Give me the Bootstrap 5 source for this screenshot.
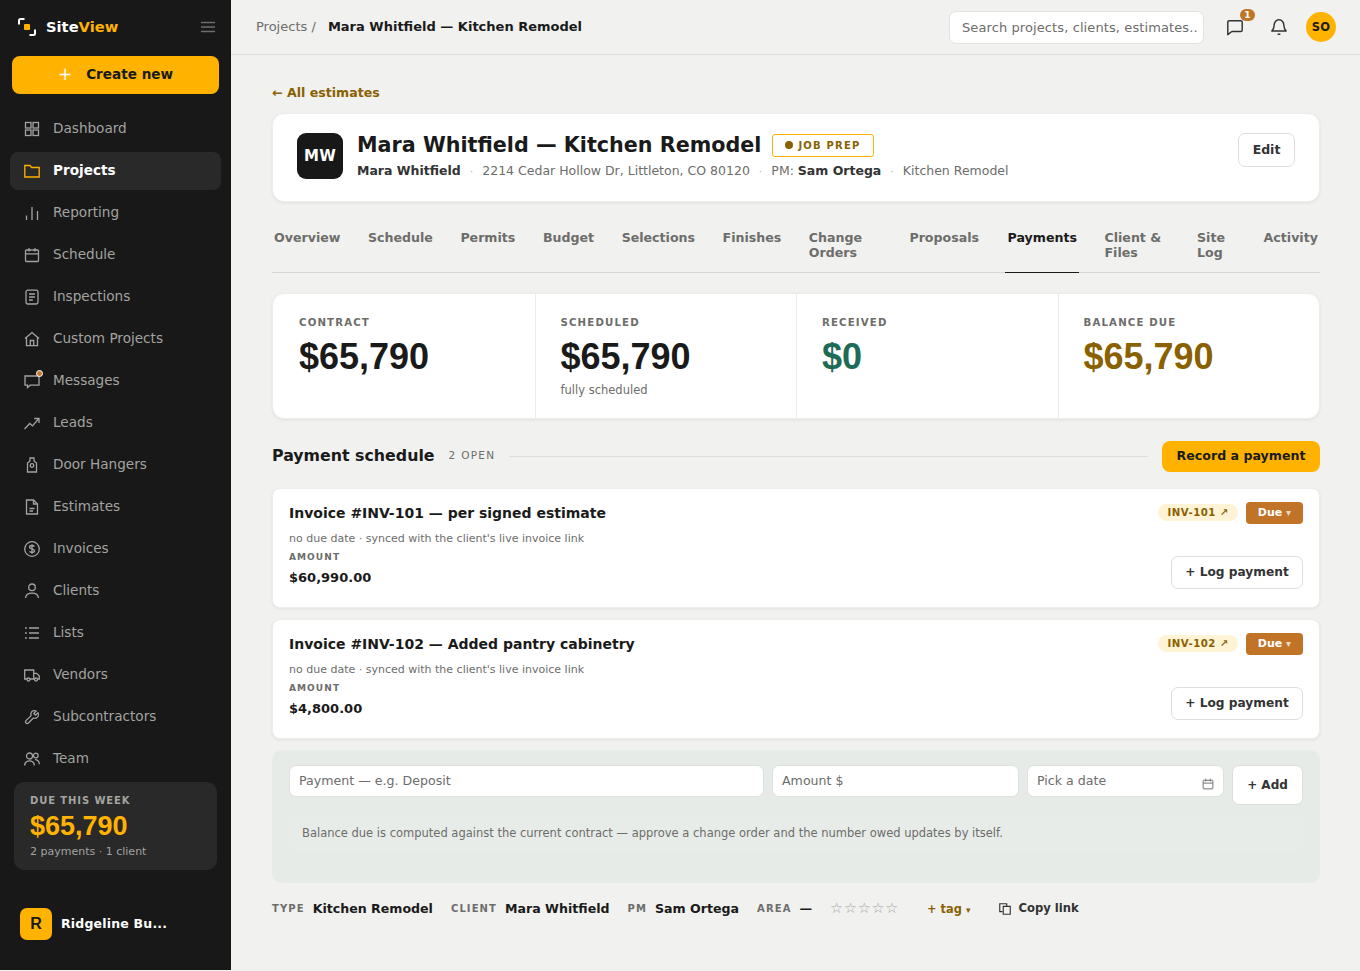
<!DOCTYPE html>
<html lang="en">
<head>
  <meta charset="UTF-8" />
  <title>SiteView - Mara Whitfield Kitchen Remodel</title>
  <meta name="viewport" content="width=device-width, initial-scale=1" />
  <link href="https://cdn.jsdelivr.net/npm/bootstrap@5.3.0/dist/css/bootstrap.min.css" rel="stylesheet" />
  <style>
    html, body { height: 100%; }
    body {
      font-family: "DejaVu Sans", sans-serif;
      background: #f1f1ef;
      color: #1a1a1a;
      overflow: hidden;
    }
    .app-shell { height: 970px; }
    .side {
      width: 231px;
      flex: none;
      background: #181818;
      height: 970px;
      padding: 0 10px;
    }
    .brand-row { height: 54px; padding: 0 5px 0 8px; }
    .brand-row > svg:first-child { margin-right: 10px; }
    .brand-name { font-size: 14.7px; font-weight: 700; color: #fff; padding-top: 1px; }
    .brand-name span { color: #ffb300; }
    .menu-lines { color: #6d6d6b; }
    .create-btn {
      margin: 2px 2px 0;
      width: 207px;
      height: 38px;
      background: #ffb300;
      border: 0;
      border-radius: 8px;
      color: #1a1a1a;
      font-size: 13.6px;
      font-weight: 700;
      padding-bottom: 2px;
    }
    .create-btn b { color: #fff; font-size: 17px; font-weight: 400; margin-right: 14px; line-height: 1; }
    .side-nav { margin-top: 16px; gap: 4px; }
    .side-link {
      height: 38px;
      border-radius: 8px;
      padding: 0 0 2px 14px;
      color: #a3a3a0;
      font-size: 13.6px;
      text-decoration: none;
      gap: 13px;
      position: relative;
    }
    .side-link svg { flex: none; width: 16px; height: 16px; margin-top: 2px; }
    .side-link.on { background: #292929; color: #fff; font-weight: 700; }
    .side-link.on svg { color: #ffb300; }
    .msg-dot {
      position: absolute;
      left: 26px;
      top: 8px;
      background: #c47a2c;
      border: 1.5px solid #fff;
      border-radius: 50%;
      box-sizing: content-box;
      width: 5px;
      height: 5px;
    }
    .due-box {
      margin: 4px 4px 0;
      height: 88px;
      background: #292929;
      border-radius: 10px;
      padding: 12px 16px;
    }
    .due-label { font-size: 10px; font-weight: 700; letter-spacing: .9px; color: #a3a3a0; line-height: 14px; }
    .due-val { font-family: "Liberation Sans", sans-serif; font-size: 27px; font-weight: 700; color: #ffb300; line-height: 32px; margin-top: 2px; }
    .due-sub { font-size: 11px; color: #a3a3a0; line-height: 15px; margin-top: 2px; }
    .org-row { margin-top: 38px; padding-left: 10px; gap: 9px; }
    .org-mark { width: 32px; height: 32px; background: #ffb300; border-radius: 7px; font-weight: 700; font-size: 16px; font-family: "Liberation Sans", sans-serif; color: #1a1a1a; }
    .org-name { color: #fff; font-size: 12.5px; font-weight: 700; letter-spacing: .2px; }

    .top-bar { height: 55px; border-bottom: 1px solid #dcdcda; padding: 0 24px 0 25px; flex: none; }
    .crumb { font-size: 13px; color: #6d6d6b; }
    .crumb strong { color: #1a1a1a; margin-left: 8px; }
    .search-box {
      width: 255px;
      height: 33px;
      background: #fff;
      border: 1px solid #e3e3e1;
      border-radius: 7px;
      padding: 0 4px 0 12px;
      font-size: 13px;
      color: #6d6d6b;
      font-family: inherit;
      letter-spacing: .1px;
    }
    .search-box::placeholder { color: #6d6d6b; opacity: 1; }
    .top-icon { color: #333; position: relative; width: 20px; height: 20px; }
    .top-icon svg { display: block; margin: 1px; }
    .count-pill {
      position: absolute;
      left: 15px;
      top: -8px;
      width: 15px;
      height: 12px;
      border-radius: 7px;
      background: #c17428;
      color: #fff;
      font-size: 9px;
      font-weight: 700;
      line-height: 12px;
      text-align: center;
    }
    .avatar-so { width: 30px; height: 30px; border-radius: 50%; background: #ffb300; font-size: 11.5px; font-weight: 700; letter-spacing: .3px; padding-top: 1px; }

    .page-body { padding: 30px 40px 0 41px; }
    .back-link { color: #8a6100; font-size: 12.6px; font-weight: 700; text-decoration: none; line-height: 16px; display: block; }
    .panel-white {
      background: #fff;
      border: 1px solid #ededeb;
      border-radius: 12px;
      box-shadow: 0 1px 3px rgba(0,0,0,.07);
    }
    .job-head { margin-top: 12px; height: 89px; padding: 19px 24px 0 24px; gap: 14px; }
    .job-mono { width: 46px; height: 46px; background: #181818; border-radius: 9px; color: #fff; font-weight: 700; font-size: 15px; letter-spacing: .3px; flex: none; }
    .job-title { font-size: 20.7px; font-weight: 700; line-height: 24px; color: #1a1a1a; }
    .job-stage {
      border: 1px solid #ffb300;
      border-radius: 3px;
      height: 23px;
      padding: 0 12px;
      margin-left: 3px;
      color: #8a6100;
      font-size: 10px;
      font-weight: 700;
      letter-spacing: 1.2px;
      gap: 5px;
    }
    .job-stage i { width: 8px; height: 8px; border-radius: 50%; background: #8a6100; display: block; }
    .job-meta { font-size: 12.5px; color: #6d6d6b; margin-top: 5px; line-height: 18px; }
    .job-meta strong { color: #333; }
    .job-meta em { font-style: normal; color: #b5b5b2; margin: 0 9px; font-size: 11px; }
    .ghost-btn {
      background: #fff;
      border: 1px solid #dededc;
      border-radius: 7px;
      color: #333;
      font-weight: 700;
      font-size: 12.5px;
    }
    .edit-btn { width: 57px; height: 34px; flex: none; }

    .tab-strip { margin-top: 17px; border-bottom: 1px solid #d6d6d4; height: 54px; }
    .tab-item {
      font-size: 12.6px;
      font-weight: 700;
      line-height: 15px;
      color: #6d6d6b;
      text-decoration: none;
      padding: 11px 2px 0;
      height: 54px;
    }
    .tab-item.on { color: #1a1a1a; border-bottom: 1px solid #1a1a1a; padding-left: 3px; padding-right: 2px; }
    .tab-change { width: 77px; }
    .tab-client { width: 69px; }
    .tab-site { width: 43px; }

    .stat-band { margin-top: 20px; height: 126px; }
    .stat-cell { padding: 22px 25px; border-left: 1px solid #ececea; }
    .stat-cell:first-child { border-left: 0; padding-left: 26px; }
    .stat-label { font-size: 10.2px; font-weight: 600; letter-spacing: 1.15px; color: #6d6d6b; line-height: 14px; }
    .stat-val { font-family: "Liberation Sans", sans-serif; font-weight: 700; font-size: 36px; line-height: 42px; margin-top: 6px; }
    .stat-note { font-size: 11.5px; color: #6d6d6b; margin-top: 4px; line-height: 16px; }
    .tone-green { color: #1e6b57; }
    .tone-gold { color: #8a6100; }

    .sched-head { margin-top: 21px; height: 32px; gap: 14px; }
    .sched-title { font-size: 15.8px; font-weight: 700; }
    .sched-open { font-size: 10.5px; letter-spacing: 1.3px; color: #6d6d6b; }
    .sched-rule { flex: 1; height: 1px; background: #dededc; }
    .record-btn {
      width: 158px;
      height: 31px;
      background: #ffb300;
      border: 0;
      border-radius: 8px;
      font-size: 12.6px;
      font-weight: 700;
      color: #1a1a1a;
    }
    .invoice-row { height: 120px; padding: 14px 16px 0; border-radius: 8px; margin-top: 16px; }
    .invoice-row + .invoice-row { margin-top: 11px; }
    .inv-title { font-size: 14px; font-weight: 700; line-height: 20px; }
    .inv-sub { font-size: 11px; color: #6d6d6b; line-height: 15px; margin-top: 8px; }
    .inv-label { font-size: 9px; font-weight: 600; letter-spacing: 1.1px; color: #6d6d6b; line-height: 12px; margin-top: 5px; }
    .inv-amount { font-size: 13px; font-weight: 700; line-height: 18px; margin-top: 6px; }
    .inv-chip { height: 17px; border-radius: 9px; background: #fff3d6; color: #8a6100; font-size: 10.2px; font-weight: 700; letter-spacing: .5px; padding: 0 9px; line-height: 17px; margin-top: 1px; }
    .inv-due { width: 57px; height: 22px; border-radius: 4px; background: #c17428; color: #fff; font-size: 11px; font-weight: 700; line-height: 22px; text-align: center; margin-top: -1px; }
    .inv-due span { opacity: .7; font-size: 10px; }
    .log-btn { width: 132px; height: 33px; font-size: 12.2px; margin-top: 32px; }

    .add-band { margin-top: 11px; height: 133px; background: #e6ebe7; border-radius: 10px; padding: 15px 17px 0; }
    .add-input {
      height: 32px;
      border: 1px solid #e0e0de;
      border-radius: 7px;
      background: #fff;
      font-size: 12.6px;
      color: #6d6d6b;
      padding: 0 9px 2px;
      font-family: inherit;
      min-width: 0;
    }
    .add-input::placeholder { color: #6d6d6b; opacity: 1; }
    .amount-field { width: 247px; flex: none; }
    .date-field { width: 197px; flex: none; }
    .date-field svg { position: absolute; right: 10px; top: 13px; color: #6d6d6b; }
    .add-btn { width: 71px; height: 40px; flex: none; font-size: 12px; }
    .add-note { margin-top: 10px; height: 37px; padding-left: 13px; background: #e7ece8; border-radius: 6px; font-size: 11.5px; color: #6d6d6b; }

    .meta-row { margin-top: 16px; height: 20px; font-size: 12.6px; font-weight: 700; color: #1a1a1a; }
    .meta-key { font-size: 10px; font-weight: 600; letter-spacing: 1.1px; color: #6d6d6b; margin-right: 8px; padding-bottom: 2px; }
    .meta-gap { margin-left: 18px; }
    .meta-stars { color: #a3a3a0; font-size: 14.5px; font-weight: 400; letter-spacing: .8px; margin-left: 18px; }
    .tag-add { color: #8a6100; font-size: 11.4px; margin-left: 28px; padding-top: 1px; }
    .tag-add span { font-size: 9px; }
    .copy-link { color: #333; font-size: 11.6px; gap: 6px; margin-left: 28px; }
  </style>
</head>
<body>
  <svg width="0" height="0" class="position-absolute">
    <defs>
      <symbol id="i-grid" viewBox="0 0 16 16"><g fill="none" stroke="currentColor" stroke-width="1.300"><rect x="1.500" y="1.500" width="5.500" height="5.500"/><rect x="9" y="1.500" width="5.500" height="5.500"/><rect x="1.500" y="9" width="5.500" height="5.500"/><rect x="9" y="9" width="5.500" height="5.500"/></g></symbol>
      <symbol id="i-folder" viewBox="0 0 16 16"><path d="M.8 2.500h5.200l1.600 2h7.600v9.500H.8z" fill="none" stroke="currentColor" stroke-width="1.300"/></symbol>
      <symbol id="i-bars" viewBox="0 0 16 16"><path d="M2.500 15V10.500M8 15V2M13.500 15V6" fill="none" stroke="currentColor" stroke-width="1.300"/></symbol>
      <symbol id="i-cal" viewBox="0 0 16 16"><g fill="none" stroke="currentColor" stroke-width="1.300"><rect x="1.500" y="3" width="13" height="11.500" rx="1"/><path d="M1.500 6.800h13M5 1v3.500M11 1v3.500"/></g></symbol>
      <symbol id="i-doc" viewBox="0 0 16 16"><g fill="none" stroke="currentColor" stroke-width="1.300"><rect x="2" y="1.200" width="12" height="13.800" rx="1.800"/><path d="M5 5h6M5 8h6M5 11h3.800"/></g></symbol>
      <symbol id="i-home" viewBox="0 0 16 16"><g fill="none" stroke="currentColor" stroke-width="1.300"><path d="M1 7.600 8 1.500l7 6.100M2.500 6.500v8.200h11V6.500"/><path d="M6.300 14.700V9.500h3.400v5.200"/></g></symbol>
      <symbol id="i-chat" viewBox="0 0 16 16"><path d="M1 3h14v9.200H6.200l-2.700 2.300v-2.300H1z" fill="none" stroke="currentColor" stroke-width="1.300"/></symbol>
      <symbol id="i-trend" viewBox="0 0 16 16"><path d="M.5 14 5.800 8.500l2.700 2.400L14.500 4M10.200 3.500h4.800v4.500" fill="none" stroke="currentColor" stroke-width="1.300"/></symbol>
      <symbol id="i-hanger" viewBox="0 0 16 16"><g fill="none" stroke="currentColor" stroke-width="1.300"><path d="M3.500 15V6L6 4V1h4v3l2.500 2v9z"/><circle cx="8" cy="8.500" r="1.800"/></g></symbol>
      <symbol id="i-file" viewBox="0 0 16 16"><g fill="none" stroke="currentColor" stroke-width="1.300"><path d="M2.500 1h7l4 4v10h-11z"/><path d="M9.500 1v4h4M5.500 9.500h5M5.500 12h3.500"/></g></symbol>
      <symbol id="i-dollar" viewBox="0 0 16 16"><circle cx="8" cy="8" r="7.300" fill="none" stroke="currentColor" stroke-width="1.300"/><path d="M10.400 5.600C10 4.800 9 4.500 8 4.500c-1.300 0-2.500.6-2.500 1.800C5.500 8.700 10.500 7.200 10.500 9.700c0 1.200-1.200 1.800-2.500 1.800-1 0-2-.3-2.500-1.100M8 3.200v9.600" fill="none" stroke="currentColor" stroke-width="1.300"/></symbol>
      <symbol id="i-user" viewBox="0 0 16 16"><g fill="none" stroke="currentColor" stroke-width="1.300"><circle cx="8" cy="4.300" r="3.300"/><path d="M1.500 15c.4-3.300 3-4.800 6.500-4.800s6.100 1.500 6.500 4.800"/></g></symbol>
      <symbol id="i-list" viewBox="0 0 16 16"><path d="M5 3h10M5 8h10M5 13h10M1 3h1.800M1 8h1.800M1 13h1.800" fill="none" stroke="currentColor" stroke-width="1.300"/></symbol>
      <symbol id="i-truck" viewBox="0 0 16 16"><g fill="none" stroke="currentColor" stroke-width="1.300"><path d="M3 12H.7V3h9V12H6M9.700 6.300h3L15.300 9v3h-1.500M9.700 12H10.500"/><circle cx="4.500" cy="12.500" r="1.500"/><circle cx="12" cy="12.500" r="1.500"/></g></symbol>
      <symbol id="i-wrench" viewBox="0 0 16 16"><path d="M14 3.800 11.500 6.200 9.800 4.500 12.200 2C10.500 1.200 8.200 1.700 7.300 3.300 6.700 4.300 6.700 5.500 7.100 6.600L2 11.600c-.7.700-.7 1.700 0 2.400s1.700.7 2.400 0l5-5c1.100.4 2.300.4 3.300-.2 1.600-.9 2.100-3.300 1.300-5z" fill="none" stroke="currentColor" stroke-width="1.300"/></symbol>
      <symbol id="i-team" viewBox="0 0 16 16"><g fill="none" stroke="currentColor" stroke-width="1.300"><circle cx="5.500" cy="5" r="3"/><circle cx="11.800" cy="4.500" r="2.300"/><path d="M.6 14.500c.3-3 2.300-4.600 4.900-4.600s4.600 1.600 4.900 4.600M11 8.700c2.500 0 4.100 1.500 4.400 4.600"/></g></symbol>
    </defs>
  </svg>

  <div class="d-flex app-shell">
    <aside class="side d-flex flex-column">
      <div class="brand-row d-flex align-items-center">
        <svg width="18" height="18" viewBox="0 0 18 18"><path d="M1 6.500V2.500Q1 1 2.500 1H6.500M17 11.500v4q0 1.500-1.500 1.500H11.500" fill="none" stroke="#fff" stroke-width="2"/><rect x="6" y="6" width="6" height="6" rx="1" fill="#ffb300"/></svg>
        <div class="brand-name">Site<span>View</span></div>
        <svg class="menu-lines ms-auto" width="16" height="16" viewBox="0 0 16 16"><path d="M1 3.500h14M1 8h14M1 12.500h14" stroke="currentColor" stroke-width="1.500"/></svg>
      </div>
      <button class="create-btn d-flex align-items-center justify-content-center"><b>+</b>Create new</button>
      <nav class="side-nav d-flex flex-column">
        <a class="side-link d-flex align-items-center" href="#"><svg><use href="#i-grid"/></svg>Dashboard</a>
        <a class="side-link on d-flex align-items-center" href="#"><svg><use href="#i-folder"/></svg>Projects</a>
        <a class="side-link d-flex align-items-center" href="#"><svg><use href="#i-bars"/></svg>Reporting</a>
        <a class="side-link d-flex align-items-center" href="#"><svg><use href="#i-cal"/></svg>Schedule</a>
        <a class="side-link d-flex align-items-center" href="#"><svg><use href="#i-doc"/></svg>Inspections</a>
        <a class="side-link d-flex align-items-center" href="#"><svg><use href="#i-home"/></svg>Custom Projects</a>
        <a class="side-link d-flex align-items-center" href="#"><svg><use href="#i-chat"/></svg><span class="msg-dot"></span>Messages</a>
        <a class="side-link d-flex align-items-center" href="#"><svg><use href="#i-trend"/></svg>Leads</a>
        <a class="side-link d-flex align-items-center" href="#"><svg><use href="#i-hanger"/></svg>Door Hangers</a>
        <a class="side-link d-flex align-items-center" href="#"><svg><use href="#i-file"/></svg>Estimates</a>
        <a class="side-link d-flex align-items-center" href="#"><svg><use href="#i-dollar"/></svg>Invoices</a>
        <a class="side-link d-flex align-items-center" href="#"><svg><use href="#i-user"/></svg>Clients</a>
        <a class="side-link d-flex align-items-center" href="#"><svg><use href="#i-list"/></svg>Lists</a>
        <a class="side-link d-flex align-items-center" href="#"><svg><use href="#i-truck"/></svg>Vendors</a>
        <a class="side-link d-flex align-items-center" href="#"><svg><use href="#i-wrench"/></svg>Subcontractors</a>
        <a class="side-link d-flex align-items-center" href="#"><svg><use href="#i-team"/></svg>Team</a>
      </nav>
      <div class="due-box">
        <div class="due-label">DUE THIS WEEK</div>
        <div class="due-val">$65,790</div>
        <div class="due-sub">2 payments · 1 client</div>
      </div>
      <div class="org-row d-flex align-items-center">
        <div class="org-mark d-flex align-items-center justify-content-center">R</div>
        <div class="org-name">Ridgeline Bu...</div>
      </div>
    </aside>

    <div class="flex-grow-1 d-flex flex-column" style="min-width:0">
      <header class="top-bar d-flex align-items-center">
        <div class="crumb">Projects / <strong>Mara Whitfield — Kitchen Remodel</strong></div>
        <input class="search-box ms-auto" style="margin-right:21px" placeholder="Search projects, clients, estimates..." />
        <div class="top-icon">
          <svg width="18" height="18" viewBox="0 0 20 20"><path d="M2 4.500Q2 3 3.500 3h13Q18 3 18 4.500v9q0 1.500-1.500 1.500H6.500L2 18.500z" fill="none" stroke="currentColor" stroke-width="1.600" stroke-linejoin="round"/></svg>
          <span class="count-pill">1</span>
        </div>
        <div class="top-icon" style="margin-left:24px">
          <svg width="18" height="18" viewBox="0 0 20 20"><path d="M2 14.500h16c-1.500-1.500-2.500-3-2.500-6 0-3.500-2.300-6.500-5.500-6.500S4.500 5 4.500 8.500c0 3-1 4.500-2.500 6zM8.500 18h3" fill="none" stroke="currentColor" stroke-width="1.600" stroke-linejoin="round"/></svg>
        </div>
        <div class="avatar-so d-flex align-items-center justify-content-center" style="margin-left:17px">SO</div>
      </header>

      <main class="page-body">
        <a class="back-link" href="#">← All estimates</a>

        <section class="panel-white job-head d-flex">
          <div class="job-mono d-flex align-items-center justify-content-center">MW</div>
          <div class="flex-grow-1">
            <div class="d-flex align-items-center gap-2">
              <div class="job-title">Mara Whitfield — Kitchen Remodel</div>
              <div class="job-stage d-flex align-items-center"><i></i>JOB PREP</div>
            </div>
            <div class="job-meta"><strong>Mara Whitfield</strong><em>·</em>2214 Cedar Hollow Dr, Littleton, CO 80120<em>·</em>PM: <strong>Sam Ortega</strong><em>·</em>Kitchen Remodel</div>
          </div>
          <button class="ghost-btn edit-btn">Edit</button>
        </section>

        <nav class="tab-strip d-flex justify-content-between">
          <a class="tab-item" href="#">Overview</a>
          <a class="tab-item" href="#">Schedule</a>
          <a class="tab-item" href="#">Permits</a>
          <a class="tab-item" href="#">Budget</a>
          <a class="tab-item" href="#">Selections</a>
          <a class="tab-item" href="#">Finishes</a>
          <a class="tab-item tab-change" href="#">Change<br>Orders</a>
          <a class="tab-item" href="#">Proposals</a>
          <a class="tab-item on" href="#">Payments</a>
          <a class="tab-item tab-client" href="#">Client &amp;<br>Files</a>
          <a class="tab-item tab-site" href="#">Site<br>Log</a>
          <a class="tab-item" href="#">Activity</a>
        </nav>

        <section class="panel-white stat-band row g-0">
          <div class="col-3 stat-cell">
            <div class="stat-label">CONTRACT</div>
            <div class="stat-val">$65,790</div>
          </div>
          <div class="col-3 stat-cell">
            <div class="stat-label">SCHEDULED</div>
            <div class="stat-val">$65,790</div>
            <div class="stat-note">fully scheduled</div>
          </div>
          <div class="col-3 stat-cell">
            <div class="stat-label">RECEIVED</div>
            <div class="stat-val tone-green">$0</div>
          </div>
          <div class="col-3 stat-cell">
            <div class="stat-label">BALANCE DUE</div>
            <div class="stat-val tone-gold">$65,790</div>
          </div>
        </section>

        <div class="sched-head d-flex align-items-center">
          <div class="sched-title">Payment schedule</div>
          <div class="sched-open">2 OPEN</div>
          <div class="sched-rule"></div>
          <button class="record-btn">Record a payment</button>
        </div>

        <article class="panel-white invoice-row d-flex justify-content-between">
          <div>
            <div class="inv-title">Invoice #INV-101 — per signed estimate</div>
            <div class="inv-sub">no due date · synced with the client's live invoice link</div>
            <div class="inv-label">AMOUNT</div>
            <div class="inv-amount">$60,990.00</div>
          </div>
          <div class="d-flex flex-column align-items-end">
            <div class="d-flex gap-2 align-items-start">
              <span class="inv-chip">INV-101 ↗</span>
              <span class="inv-due">Due <span>▾</span></span>
            </div>
            <button class="ghost-btn log-btn">+ Log payment</button>
          </div>
        </article>

        <article class="panel-white invoice-row d-flex justify-content-between">
          <div>
            <div class="inv-title">Invoice #INV-102 — Added pantry cabinetry</div>
            <div class="inv-sub">no due date · synced with the client's live invoice link</div>
            <div class="inv-label">AMOUNT</div>
            <div class="inv-amount">$4,800.00</div>
          </div>
          <div class="d-flex flex-column align-items-end">
            <div class="d-flex gap-2 align-items-start">
              <span class="inv-chip">INV-102 ↗</span>
              <span class="inv-due">Due <span>▾</span></span>
            </div>
            <button class="ghost-btn log-btn">+ Log payment</button>
          </div>
        </article>

        <section class="add-band">
          <div class="d-flex gap-2 align-items-start">
            <input class="add-input flex-grow-1" placeholder="Payment — e.g. Deposit" />
            <input class="add-input amount-field" placeholder="Amount $" />
            <div class="date-field position-relative">
              <input class="add-input w-100" placeholder="Pick a date" />
              <svg width="12" height="12" viewBox="0 0 16 16"><use href="#i-cal"/></svg>
            </div>
            <button class="ghost-btn add-btn">+ Add</button>
          </div>
          <div class="add-note d-flex align-items-center">Balance due is computed against the current contract — approve a change order and the number owed updates by itself.</div>
        </section>

        <div class="meta-row d-flex align-items-center">
          <span class="meta-key">TYPE</span><span>Kitchen Remodel</span>
          <span class="meta-key meta-gap">CLIENT</span><span>Mara Whitfield</span>
          <span class="meta-key meta-gap">PM</span><span>Sam Ortega</span>
          <span class="meta-key meta-gap">AREA</span><span>—</span>
          <span class="meta-stars">☆☆☆☆☆</span>
          <span class="tag-add">+ tag <span>▾</span></span>
          <span class="copy-link d-flex align-items-center">
            <svg width="14" height="14" viewBox="0 0 16 16"><path d="M5 11H2V2h8v3M6 5h8v9H6z" fill="none" stroke="currentColor" stroke-width="1.300"/></svg>Copy link</span>
        </div>
      </main>
    </div>
  </div>
  <script src="https://cdn.jsdelivr.net/npm/bootstrap@5.3.0/dist/js/bootstrap.bundle.min.js"></script>
</body>
</html>
